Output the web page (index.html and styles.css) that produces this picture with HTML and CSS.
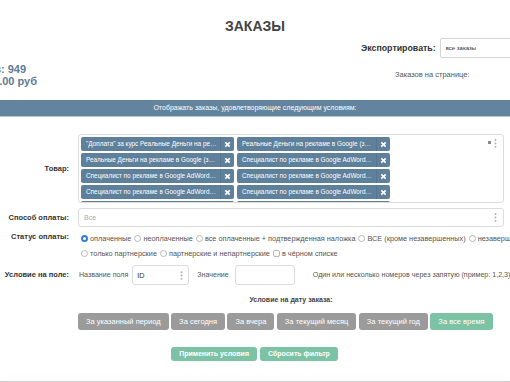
FILE: index.html
```html
<!DOCTYPE html>
<html lang="ru">
<head>
<meta charset="utf-8">
<title>Заказы</title>
<link rel="stylesheet" href="styles.css">
</head>
<body>
<div class="page">
  <h1 class="title">ЗАКАЗЫ</h1>
  <div class="head">
    <div class="stats">
      <div class="stat s1"><span>Всего заказов: 949</span></div>
      <div class="stat s2"><span>На сумму: 1 234 500.00 руб</span></div>
    </div>
    <div class="export">
      <div class="export-row">
        <span class="export-label">Экспортировать:</span>
        <div class="select">все заказы</div>
      </div>
      <div class="per-page">Заказов на странице:</div>
    </div>
  </div>
  <div class="bar">Отображать заказы, удовлетворяющие следующим условиям:</div>
  <div class="form">
    <div class="label">Товар:</div>
    <div class="tagbox">
      <div class="tags">
        <div class="tag"><span class="tag-text">"Доплата" за курс Реальные Деньги на рекламе в Google</span><span class="tag-x"><svg viewBox="0 0 8 8"><path d="M1.5 1.5 6.5 6.5M6.5 1.5 1.5 6.5"/></svg></span></div>
        <div class="tag"><span class="tag-text">Реальные Деньги на рекламе в Google (за полную стоимость)</span><span class="tag-x"><svg viewBox="0 0 8 8"><path d="M1.5 1.5 6.5 6.5M6.5 1.5 1.5 6.5"/></svg></span></div>
        <div class="tag"><span class="tag-text">Реальные Деньги на рекламе в Google (за рассрочку)</span><span class="tag-x"><svg viewBox="0 0 8 8"><path d="M1.5 1.5 6.5 6.5M6.5 1.5 1.5 6.5"/></svg></span></div>
        <div class="tag"><span class="tag-text">Специалист по рекламе в Google AdWords (базовый)</span><span class="tag-x"><svg viewBox="0 0 8 8"><path d="M1.5 1.5 6.5 6.5M6.5 1.5 1.5 6.5"/></svg></span></div>
        <div class="tag"><span class="tag-text">Специалист по рекламе в Google AdWords (VIP)</span><span class="tag-x"><svg viewBox="0 0 8 8"><path d="M1.5 1.5 6.5 6.5M6.5 1.5 1.5 6.5"/></svg></span></div>
        <div class="tag"><span class="tag-text">Специалист по рекламе в Google AdWords (Стандарт)</span><span class="tag-x"><svg viewBox="0 0 8 8"><path d="M1.5 1.5 6.5 6.5M6.5 1.5 1.5 6.5"/></svg></span></div>
        <div class="tag"><span class="tag-text">Специалист по рекламе в Google AdWords (Эконом)</span><span class="tag-x"><svg viewBox="0 0 8 8"><path d="M1.5 1.5 6.5 6.5M6.5 1.5 1.5 6.5"/></svg></span></div>
        <div class="tag"><span class="tag-text">Специалист по рекламе в Google AdWords (рассрочка)</span><span class="tag-x"><svg viewBox="0 0 8 8"><path d="M1.5 1.5 6.5 6.5M6.5 1.5 1.5 6.5"/></svg></span></div>
        <div class="tag"><span class="tag-text">Специалист по рекламе в Google AdWords (доплата)</span><span class="tag-x"><svg viewBox="0 0 8 8"><path d="M1.5 1.5 6.5 6.5M6.5 1.5 1.5 6.5"/></svg></span></div>
        <div class="tag"><span class="tag-text">Специалист по рекламе в Google AdWords (предоплата)</span><span class="tag-x"><svg viewBox="0 0 8 8"><path d="M1.5 1.5 6.5 6.5M6.5 1.5 1.5 6.5"/></svg></span></div>
      </div>
      <span class="clear-all"></span>
      <svg class="dots dots-tags" viewBox="0 0 3 9"><circle cx="1.5" cy="1.2" r="0.9"/><circle cx="1.5" cy="4.5" r="0.9"/><circle cx="1.5" cy="7.8" r="0.9"/></svg>
    </div>

    <div class="label">Способ оплаты:</div>
    <div class="input wide"><span class="placeholder">Все</span><svg class="dots" viewBox="0 0 3 9"><circle cx="1.5" cy="1.2" r="0.9"/><circle cx="1.5" cy="4.5" r="0.9"/><circle cx="1.5" cy="7.8" r="0.9"/></svg></div>

    <div class="label top">Статус оплаты:</div>
    <div class="status">
      <div class="opts">
        <span class="opt"><span class="radio on"></span>оплаченные</span>
        <span class="opt"><span class="radio"></span>неоплаченные</span>
        <span class="opt"><span class="radio"></span>все оплаченные + подтвержденная наложка</span>
        <span class="opt"><span class="radio"></span>ВСЕ (кроме незавершенных)</span>
        <span class="opt"><span class="radio"></span>незавершенные</span>
      </div>
      <div class="opts">
        <span class="opt"><span class="radio"></span>только партнерские</span>
        <span class="opt"><span class="radio"></span>партнерские и непартнерские</span>
        <span class="opt"><span class="check"></span>в чёрном списке</span>
      </div>
    </div>

    <div class="label">Условие на поле:</div>
    <div class="cond">
      <span class="muted">Название поля</span>
      <div class="input field-name"><span>ID</span><svg class="dots" viewBox="0 0 3 9"><circle cx="1.5" cy="1.2" r="0.9"/><circle cx="1.5" cy="4.5" r="0.9"/><circle cx="1.5" cy="7.8" r="0.9"/></svg></div>
      <span class="muted value-label">Значение</span>
      <div class="input field-value"></div>
      <span class="muted hint">Один или несколько номеров через запятую (пример: 1,2,3)</span>
    </div>

    <div class="dates">
      <div class="dates-title">Условие на дату заказа:</div>
      <div class="btns">
        <span class="btn">За указанный период</span>
        <span class="btn">За сегодня</span>
        <span class="btn">За вчера</span>
        <span class="btn">За текущий месяц</span>
        <span class="btn">За текущий год</span>
        <span class="btn green">За все время</span>
      </div>
    </div>
  </div>
  <div class="actions">
    <span class="btn green small">Применить условия</span>
    <span class="btn green small">Сбросить фильтр</span>
  </div>
  <div class="footer"></div>
</div>
</body>
</html>
```
FILE: styles.css
```css
html, body {
  margin: 0;
  padding: 0;
}
body {
  width: 510px;
  height: 382px;
  overflow: hidden;
  background: #fff;
  font-family: "Liberation Sans", Arial, sans-serif;
  color: #333;
}
.page {
  width: 510px;
  height: 382px;
  overflow: hidden;
  display: flex;
  flex-direction: column;
}
.title {
  margin: 0;
  padding-top: 18px;
  text-align: center;
  font-size: 14px;
  line-height: 16px;
  font-weight: bold;
  color: #444;
}
.head {
  display: flex;
  margin-top: 4px;
  height: 42px;
}
.stats {
  flex: none;
  margin-top: 25px;
  font-size: 11px;
  line-height: 12px;
  font-weight: bold;
  color: #5c7b97;
}
.stat {
  display: flex;
  justify-content: flex-end;
  white-space: nowrap;
  overflow: hidden;
}
.s1 { width: 26px; }
.s2 { width: 37px; }
.export {
  flex: none;
  margin-left: auto;
  width: 149px;
}
.export-row {
  display: flex;
  align-items: center;
  height: 20px;
}
.export-label {
  font-size: 8.8px;
  font-weight: bold;
  color: #333;
  white-space: nowrap;
}
.select {
  flex: none;
  margin-left: 4px;
  width: 90px;
  height: 20px;
  box-sizing: border-box;
  border: 1px solid #d6d6d6;
  border-radius: 2px;
  font-size: 6px;
  line-height: 18px;
  padding-left: 5px;
  color: #333;
}
.per-page {
  margin-top: 12px;
  padding-left: 34px;
  font-size: 7.5px;
  line-height: 10px;
  color: #555;
  white-space: nowrap;
}
.bar {
  margin-top: 20px;
  height: 16px;
  line-height: 16px;
  background: #62849f;
  border-bottom: 1px solid #b3c6d4;
  color: #fff;
  font-size: 7px;
  text-align: center;
}
.form {
  display: grid;
  grid-template-columns: 69px 426px;
  column-gap: 9px;
  row-gap: 5px;
  align-items: center;
  padding-top: 17px;
  width: 504px;
}
.label {
  text-align: right;
  font-size: 7.5px;
  font-weight: bold;
  color: #333;
  white-space: nowrap;
}
.label.top {
  align-self: start;
  line-height: 10px;
}
.tagbox {
  position: relative;
  height: 69px;
  box-sizing: border-box;
  border: 1px solid #dcdcdc;
  border-radius: 3px;
  padding: 2px 2px;
  overflow: hidden;
}
.tags {
  display: flex;
  flex-wrap: wrap;
  gap: 2px 3px;
  width: 330px;
}
.tag {
  display: flex;
  width: 153px;
  height: 14px;
  background: #5e809b;
  border-radius: 2px;
  color: #fff;
  font-size: 6.4px;
  line-height: 14px;
}
.tag-text {
  flex: 1;
  min-width: 0;
  padding-left: 5px;
  padding-right: 2px;
  white-space: nowrap;
  overflow: hidden;
  text-overflow: ellipsis;
}
.tag-x {
  flex: none;
  width: 13px;
  display: flex;
  align-items: center;
  justify-content: center;
  border-left: 1px solid #56768f;
}
.tag-x svg {
  width: 7px;
  height: 7px;
  stroke: #fff;
  stroke-width: 2;
  fill: none;
}
.clear-all {
  position: absolute;
  top: 6px;
  right: 12px;
  width: 3px;
  height: 3px;
  background: #888;
}
.dots {
  width: 3px;
  height: 9px;
  fill: #aaa;
  flex: none;
}
.dots-tags {
  position: absolute;
  top: 4px;
  right: 6px;
}
.input {
  flex: none;
  box-sizing: border-box;
  border: 1px solid #dcdcdc;
  border-radius: 3px;
  display: flex;
  align-items: center;
  font-size: 7.5px;
}
.wide {
  height: 19px;
  padding: 0 6px 0 5px;
  justify-content: space-between;
}
.placeholder {
  color: #aaa;
  font-size: 7px;
}
.status {
  padding-top: 1px;
  font-size: 7.3px;
  color: #555;
  white-space: nowrap;
}
.opts {
  display: flex;
  align-items: center;
  height: 10px;
  margin-left: 3px;
}
.opts + .opts {
  margin-top: 5px;
}
.opt {
  flex: none;
  display: flex;
  align-items: center;
  margin-right: 3px;
}
.radio, .check {
  flex: none;
  width: 7px;
  height: 7px;
  box-sizing: border-box;
  border: 1px solid #b8b8b8;
  border-radius: 50%;
  margin-right: 2px;
  background: #fff;
}
.check {
  border-radius: 2px;
}
.radio.on {
  border: 2.2px solid #2f80dd;
}
.cond {
  display: flex;
  align-items: center;
  white-space: nowrap;
  margin-top: 2px;
  font-size: 7.1px;
}
.muted {
  flex: none;
  color: #555;
  margin-left: 1px;
}
.field-name {
  margin-left: 4px;
  width: 57px;
  height: 20px;
  padding: 0 5px 0 4px;
  justify-content: space-between;
  color: #333;
  font-size: 7.3px;
}
.field-value {
  margin-left: 6px;
  width: 60px;
  height: 20px;
}
.value-label {
  margin-left: 8px;
}
.hint {
  margin-left: 18px;
}
.dates {
  grid-column: 2;
  margin-top: 5px;
}
.dates-title {
  text-align: center;
  font-size: 7px;
  font-weight: bold;
  color: #444;
  line-height: 10px;
}
.btns {
  display: flex;
  gap: 2.5px;
  margin-top: 8px;
}
.btn {
  display: inline-block;
  height: 17px;
  line-height: 17px;
  padding: 0 8px;
  background: #9b9b9b;
  border-radius: 3px;
  color: #fff;
  font-size: 7.5px;
  white-space: nowrap;
}
.btn.green {
  background: #7cc2a5;
}
.actions {
  display: flex;
  justify-content: center;
  gap: 3px;
  margin-top: 17px;
  padding-right: 1px;
}
.btn.small {
  height: 14px;
  line-height: 14px;
  padding: 0 8px;
  font-size: 7px;
  font-weight: bold;
}
.footer {
  margin-top: auto;
  height: 1px;
  background: #d0d0d0;
  box-shadow: 0 -5px 10px rgba(0, 0, 0, 0.06);
}
```
